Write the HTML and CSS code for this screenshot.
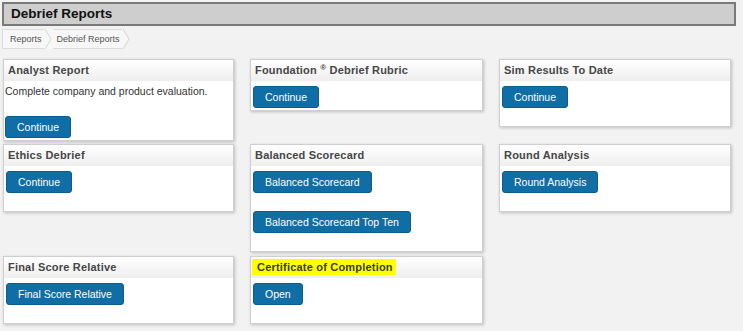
FILE: index.html
```html
<!DOCTYPE html>
<html>
<head>
<meta charset="utf-8">
<title>Debrief Reports</title>
<link rel="stylesheet" href="styles.css">
</head>
<body>
<div class="page-title">Debrief Reports</div>
<div class="crumbs">
  <span class="crumb">Reports</span>
  <svg class="sep" width="9" height="20" viewBox="0 0 9 20"><polyline points="1,0 7,10 1,20" fill="none" stroke="#d6d6d6" stroke-width="1"/></svg>
  <span class="crumb">Debrief Reports</span>
  <svg class="sep-end" width="9" height="20" viewBox="0 0 9 20"><polygon points="0,0 1,0 7,10 1,20 0,20" fill="#f7f7f7"/><polyline points="1,0 7,10 1,20" fill="none" stroke="#d6d6d6" stroke-width="1"/></svg>
</div>

<div class="grid">
  <div class="card">
    <div class="card-head">Analyst Report</div>
    <div class="card-body body-text">
      <p class="desc">Complete company and product evaluation.</p>
      <a class="btn btn-tight">Continue</a>
    </div>
  </div>
  <div class="card">
    <div class="card-head">Foundation <sup class="reg">®</sup> Debrief Rubric</div>
    <div class="card-body">
      <a class="btn btn-tight">Continue</a>
    </div>
  </div>
  <div class="card">
    <div class="card-head">Sim Results To Date</div>
    <div class="card-body">
      <a class="btn">Continue</a>
    </div>
  </div>

  <div class="card">
    <div class="card-head">Ethics Debrief</div>
    <div class="card-body">
      <a class="btn">Continue</a>
    </div>
  </div>
  <div class="card">
    <div class="card-head">Balanced Scorecard</div>
    <div class="card-body">
      <a class="btn">Balanced Scorecard</a>
      <a class="btn">Balanced Scorecard Top Ten</a>
    </div>
  </div>
  <div class="card">
    <div class="card-head">Round Analysis</div>
    <div class="card-body">
      <a class="btn">Round Analysis</a>
    </div>
  </div>

  <div class="card row3">
    <div class="card-head">Final Score Relative</div>
    <div class="card-body">
      <a class="btn">Final Score Relative</a>
    </div>
  </div>
  <div class="card row3">
    <div class="card-head head-hl"><span class="hl">Certificate of Completion</span></div>
    <div class="card-body">
      <a class="btn">Open</a>
    </div>
  </div>
</div>
</body>
</html>
```

FILE: styles.css
```css
html, body {
  margin: 0;
  padding: 0;
}
body {
  background: #f2f2f2;
  font-family: "Liberation Sans", Arial, sans-serif;
  color: #333;
  width: 743px;
  height: 331px;
  overflow: hidden;
}
.page-title {
  margin: 2px 0 0 2px;
  width: 723px;
  height: 20px;
  border: 2px solid #7a7a7a;
  background: #cecece;
  padding-left: 7px;
  font-size: 13.5px;
  font-weight: bold;
  line-height: 20px;
  color: #111;
}
.crumbs {
  margin: 3px 0 0 2px;
  display: flex;
  align-items: stretch;
  height: 20px;
}
.crumb {
  display: flex;
  align-items: center;
  background: #f7f7f7;
  border-top: 1px solid #dcdcdc;
  border-bottom: 1px solid #dcdcdc;
  font-size: 9px;
  color: #555;
  padding: 0 2px 0 4px;
}
.crumb:first-child {
  border-left: 1px solid #dcdcdc;
  padding-left: 7px;
}
.sep {
  display: block;
  background: #f7f7f7;
  flex: none;
}
.sep-end {
  display: block;
  flex: none;
}
.grid {
  margin: 10px 0 0 3px;
  display: grid;
  grid-template-columns: 231px 233px 232px;
  column-gap: 16px;
  row-gap: 3px;
  align-items: start;
}
.row3 {
  margin-top: 1px;
}
.card {
  background: #fff;
  border: 1px solid #cfcfcf;
  box-shadow: 1px 1px 3px rgba(0, 0, 0, 0.22);
}
.card-head {
  height: 21px;
  line-height: 21px;
  padding: 0 4px;
  font-size: 11px;
  font-weight: bold;
  letter-spacing: 0.2px;
  color: #464646;
  background: linear-gradient(#ffffff, #eeeeee);
}
.reg {
  font-size: 8px;
  vertical-align: 4px;
  line-height: 0;
}
.head-hl {
  padding-left: 1px;
}
.hl {
  display: inline-block;
  background: #ffff00;
  line-height: 16px;
  padding: 0 3px 0 5px;
  color: #3b3b1a;
}
.card-body {
  padding: 5px 4px 0 2px;
}
.body-text {
  padding-top: 3px;
  padding-left: 1px;
}
.desc {
  margin: 0 0 18px 0;
  font-size: 10.5px;
  line-height: 14px;
  color: #333;
}
.btn {
  display: table;
  height: 22px;
  box-sizing: border-box;
  padding: 0 11px;
  margin-bottom: 18px;
  background: #0e6ea5;
  border: 1px solid #0a5d8d;
  border-radius: 3px;
  color: #fff;
  font-size: 10.5px;
  line-height: 20px;
  text-decoration: none;
}
.btn-tight {
  margin-bottom: 2px;
}
```
